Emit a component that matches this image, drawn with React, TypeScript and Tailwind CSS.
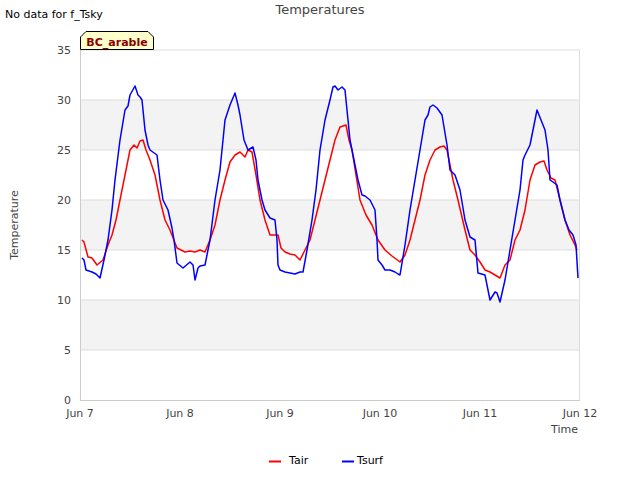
import React from "react";

const tair: [number, number][] = [[82,16],[84,15.8],[88,14.3],[92,14.2],[97,13.5],[103,14],[108,15.5],[112,16.5],[116,18],[120,20],[125,22.5],[130,25],[134,25.5],[137,25.2],[140,25.9],[143,26],[146,25],[150,24],[155,22.5],[160,20],[165,18],[170,17],[177,15.2],[185,14.8],[190,14.9],[195,14.8],[200,15],[205,14.8],[210,16],[215,17.5],[220,20],[225,22],[230,23.8],[235,24.5],[240,24.8],[245,24.3],[248,25],[252,24.8],[256,22.5],[260,20],[265,18],[270,16.5],[278,16.5],[281,15.2],[285,14.8],[290,14.6],[295,14.5],[300,14],[305,15],[310,16],[315,18],[320,20],[325,22],[330,24],[335,26],[340,27.3],[346,27.5],[349,26],[352,25],[356,22.5],[360,20],[366,18.5],[372,17.5],[378,16],[385,15],[392,14.4],[400,13.8],[405,14.5],[410,16],[415,18],[420,20],[425,22.5],[430,24],[435,25],[440,25.3],[444,25.4],[447,25],[450,23.5],[453,22],[458,20],[465,17],[470,15],[475,14.5],[480,13.8],[485,13],[490,12.8],[495,12.5],[500,12.2],[505,13.5],[510,14],[515,16],[520,17],[525,19],[530,22],[535,23.5],[540,23.8],[544,23.9],[547,23],[551,22.2],[555,22],[560,20],[565,18],[570,16.5],[575,15.5],[577,15]];
const tsurf: [number, number][] = [[82,14.2],[84,14],[86,13],[92,12.8],[96,12.6],[100,12.2],[104,14],[108,16],[112,19],[115,22],[120,26],[125,29],[128,29.4],[130,30.5],[135,31.4],[138,30.5],[140,30.3],[142,30],[145,27],[148,25.5],[150,25],[157,24.5],[160,22],[163,20],[168,19],[172,17.2],[174,16],[177,13.7],[183,13.2],[190,13.8],[193,13.5],[195,12],[198,13.2],[200,13.4],[205,13.5],[210,16],[215,20],[220,23],[225,28],[230,29.5],[235,30.7],[238,29.5],[240,28.5],[244,26],[248,25],[253,25.3],[256,24],[258,22],[262,20],[265,19],[270,18.2],[275,18],[277,16],[278,13.5],[280,13],[285,12.8],[290,12.7],[295,12.6],[300,12.8],[303,12.8],[307,15],[312,18],[316,21],[320,25],[325,28],[330,30],[333,31.3],[335,31.4],[338,31],[342,31.3],[345,31],[348,28],[350,26],[354,24],[358,22],[362,20.5],[365,20.4],[370,20],[375,19],[377,16],[378,14],[382,13.5],[385,13],[390,13],[395,12.8],[398,12.6],[400,12.5],[405,15.5],[410,19],[415,22],[420,25],[425,28],[428,28.5],[430,29.3],[433,29.5],[437,29.2],[442,28.5],[447,25.5],[450,23],[455,22.5],[460,21],[465,18],[470,16.3],[475,16],[478,12.7],[485,12.5],[488,11],[490,10],[495,10.8],[497,10.7],[500,9.8],[505,12],[510,15],[515,18],[520,21],[523,24],[525,24.5],[530,25.5],[533,27],[537,29],[541,28],[545,27],[548,25],[550,22],[553,21.8],[557,21.5],[560,20],[565,18],[569,17],[573,16.5],[576,15.5],[578,12.2]];

const pts = (d: [number, number][]) => d.map(([x, v]) => `${x},${(400 - v * 10).toFixed(1)}`).join(" ");

export default function App() {
  const font = { fontFamily: '"DejaVu Sans", sans-serif' };
  return (
    <div className="relative w-[640px] h-[480px] bg-white overflow-hidden" style={font}>
      <svg width="640" height="480" className="absolute left-0 top-0">
        <rect x="80" y="100" width="500" height="50" fill="#f3f3f3" />
        <rect x="80" y="200" width="500" height="50" fill="#f3f3f3" />
        <rect x="80" y="300" width="500" height="50" fill="#f3f3f3" />
        {[50, 100, 150, 200, 250, 300, 350].map((y) => (
          <line key={y} x1="80" x2="580" y1={y} y2={y} stroke="#dddddd" strokeWidth="1" />
        ))}
        <line x1="80.5" x2="80.5" y1="50" y2="400" stroke="#cccccc" />
        <line x1="579.5" x2="579.5" y1="50" y2="400" stroke="#dddddd" />
        <line x1="80" x2="580" y1="400.5" y2="400.5" stroke="#cccccc" />
        {[35, 30, 25, 20, 15, 10, 5, 0].map((v) => (
          <text key={v} x="71" y={400 - v * 10 + 4} textAnchor="end" fontSize="11" fill="#444">{v}</text>
        ))}
        {["Jun 7", "Jun 8", "Jun 9", "Jun 10", "Jun 11", "Jun 12"].map((t, i) => (
          <text key={t} x={80 + i * 100} y="417" textAnchor="middle" fontSize="11" fill="#444">{t}</text>
        ))}
        <text x="578" y="433" textAnchor="end" fontSize="11" fill="#444">Time</text>
        <text x="18" y="225" textAnchor="middle" fontSize="11" fill="#444" transform="rotate(-90 18 225)">Temperature</text>
        <text x="320" y="14" textAnchor="middle" fontSize="13" fill="#444">Temperatures</text>
        <text x="5" y="18" fontSize="11" fill="#000">No data for f_Tsky</text>
        <polygon points="80.5,49.5 80.5,37 86,31.5 148,31.5 153.5,37 153.5,49.5" fill="#ffffcc" stroke="#000" />
        <text x="117" y="46" textAnchor="middle" fontSize="11" fontWeight="bold" fill="#8b0000">BC_arable</text>
        <polyline points={pts(tair)} fill="none" stroke="#ff0000" strokeWidth="1.5" strokeLinejoin="round" />
        <polyline points={pts(tsurf)} fill="none" stroke="#0000ff" strokeWidth="1.5" strokeLinejoin="round" />
        <line x1="269" x2="281" y1="461.5" y2="461.5" stroke="#ff0000" strokeWidth="2" />
        <text x="289" y="464" fontSize="11" fill="#000">Tair</text>
        <line x1="342" x2="354" y1="461.5" y2="461.5" stroke="#0000ff" strokeWidth="2" />
        <text x="370" y="464" textAnchor="middle" fontSize="11" fill="#000">Tsurf</text>
      </svg>
    </div>
  );
}
